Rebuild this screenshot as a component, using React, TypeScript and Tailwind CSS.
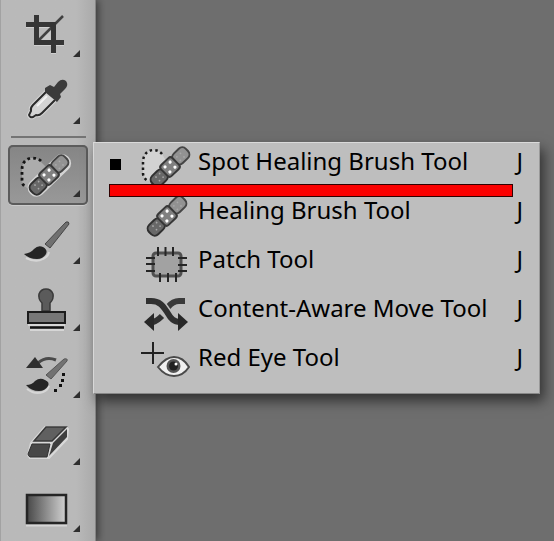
import type { ReactNode } from "react";

const dots = [
  [-3.5, -3.5],
  [3.5, -3.5],
  [-3.5, 3.5],
  [3.5, 3.5],
];

function Bandage({ x, y, halo = false }: { x: number; y: number; halo?: boolean }) {
  return (
    <g transform={`translate(${x} ${y}) rotate(-44)`}>
      {halo && (
        <rect x="-25" y="-7" width="50" height="15" rx="7" fill="none" stroke="#d4d4d4" strokeWidth="3" />
      )}
      <rect x="-24" y="-6" width="17" height="13" rx="5" fill="#686868" stroke="#303030" strokeWidth="2" />
      <rect x="7" y="-7" width="17" height="13" rx="5" fill="#929292" stroke="#454545" strokeWidth="2" />
      <rect x="-8" y="-7.500" width="16" height="15" rx="3" fill="#808080" stroke="#383838" strokeWidth="2" />
      {dots.map(([cx, cy]) => (
        <circle key={`${cx},${cy}`} cx={cx} cy={cy} r="1.600" fill="#fff" />
      ))}
      {[-17, -12, 12, 17].map((cx) => (
        <g key={cx} fill="#a8a8a8">
          <circle cx={cx} cy="-2.500" r="0.900" />
          <circle cx={cx} cy="2.500" r="0.900" />
        </g>
      ))}
    </g>
  );
}

function ToolIcon({ top, children }: { top: number; children: ReactNode }) {
  return (
    <svg viewBox={`8 ${top} 80 60`} className="block h-15 w-20" fill="none" aria-hidden="true">
      {children}
      <path d={`M80 ${top + 45}v7h-7z`} fill="#2e2e2e" />
    </svg>
  );
}

const crop = (
  <ToolIcon top={5}>
    <path d="M36.500 16V43.500H64M26 25.500H53.500V54" stroke="#d0d0d0" strokeWidth="5" />
    <path d="M39 42L52 28V41H39z" fill="#c8c8c8" />
    <path d="M38 41L63 16" stroke="#404040" strokeWidth="2.500" />
    <path d="M36.500 15V42.500H64M26 24.500H53.500V53" stroke="#353535" strokeWidth="5" />
  </ToolIcon>
);

const eyedropper = (
  <ToolIcon top={72}>
    <path d="M46 92L33 105q-3 3-2 6l-2 4q1 3 4 2l3-2q3 1 6-2L55 100" stroke="#d6d6d6" strokeWidth="4" />
    <path d="M46 92L33 105q-3 3-2 6l-2 4q1 3 4 2l3-2q3 1 6-2L55 100" fill="#d4d4d4" stroke="#2b2b2b" strokeWidth="2" />
    <path d="M37 106l10-10" stroke="#f2f2f2" strokeWidth="2" />
    <path d="M45 88l5-3 4 2 4-5q4-4 8-1 3 4-1 8l-5 5 1 3-4 5-12-10z" fill="#3b3b3b" />
  </ToolIcon>
);

const spotHealing = (
  <ToolIcon top={145}>
    <path d="M41 162q-3-4-10-4-9 2-9 12v10q0 5 5 8l22-18z" fill="#acacac" />
    <path d="M41 161q-3-3-10-3-9 2-9 12v10q0 5 4 7" stroke="#151515" strokeWidth="2.800" strokeDasharray="2.800 3" />
    <Bandage x={49} y={175} halo />
  </ToolIcon>
);

const brush = (
  <ToolIcon top={212}>
    <path d="M26 258q10 5 17 1 5-2 6-7" stroke="#d6d6d6" strokeWidth="2" />
    <path d="M45 244L66 222q3-1 3 2L50 248z" fill="#707070" stroke="#454545" />
    <path d="M24 254q7-1 10-5 4-4 9-2 5 3 3 7-3 5-9 5-8 0-13-5z" fill="#252525" />
  </ToolIcon>
);

const stamp = (
  <ToolIcon top={279}>
    <path d="M28 325h37M30 330h34" stroke="#d6d6d6" strokeWidth="2" />
    <path d="M42 311V303q-4-4-3-9 2-5 7-5t7 5q1 5-3 9v8z" fill="#5b5b5b" stroke="#3a3a3a" strokeWidth="1.500" />
    <rect x="28" y="312" width="37" height="11" fill="#777" stroke="#1c1c1c" strokeWidth="2" />
    <path d="M30 327.500h34" stroke="#111" strokeWidth="2.500" />
  </ToolIcon>
);

const historyBrush = (
  <ToolIcon top={345}>
    <path d="M38 362q8-7 18-3" stroke="#4a4a4a" strokeWidth="3" />
    <path d="M35 356l8 11H26z" fill="#303030" />
    <path d="M46 374L64 358q4-1 3 2L51 378z" fill="#727272" stroke="#555" />
    <path d="M27 388q8 6 16 3 5-2 6-6" stroke="#d6d6d6" strokeWidth="2" />
    <path d="M26 384q6 0 9-4 5-4 10-1 5 2 3 6-3 5-9 5-8 0-13-6z" fill="#252525" />
    <path d="M62 372h3v3h-3zM61 378h3v3h-3zM59 383h3v3h-3zM54 388h3v3h-3z" fill="#111" />
  </ToolIcon>
);

const eraser = (
  <ToolIcon top={412}>
    <path d="M45 426h21l2 2-1 10-18 19H30l-2-3 3-12z" fill="#d8d8d8" stroke="#d8d8d8" strokeWidth="2" />
    <path d="M46 426h20L52 440H34z" fill="#606060" stroke="#383838" strokeWidth="1.500" />
    <path d="M32 443h18l-3 13H30q-2-1-2-3z" fill="#484848" stroke="#303030" />
    <path d="M53 442l14-14v8L49 455z" fill="#3e3e3e" />
  </ToolIcon>
);

const gradient = (
  <ToolIcon top={479}>
    <defs>
      <linearGradient id="swatch">
        <stop stopColor="#484848" />
        <stop offset="1" stopColor="#d2d2d2" />
      </linearGradient>
    </defs>
    <path d="M26 524.500h41" stroke="#d6d6d6" strokeWidth="2" />
    <rect x="27" y="494" width="39" height="28" fill="url(#swatch)" stroke="#252525" strokeWidth="2.500" />
  </ToolIcon>
);

const tools = [
  { name: "Crop", icon: crop },
  { name: "Eyedropper", icon: eyedropper },
  { name: "Spot Healing Brush", icon: spotHealing, active: true },
  { name: "Brush", icon: brush },
  { name: "Clone Stamp", icon: stamp },
  { name: "History Brush", icon: historyBrush },
  { name: "Eraser", icon: eraser },
  { name: "Gradient", icon: gradient },
];

function MenuIcon({ top, children }: { top: number; children: ReactNode }) {
  return (
    <svg
      viewBox={`139 ${top} 52 40`}
      className="ml-[18px] block h-10 w-[52px] shrink-0 overflow-visible"
      fill="none"
      aria-hidden="true"
    >
      {children}
    </svg>
  );
}

const items = [
  {
    name: "Spot Healing Brush Tool",
    selected: true,
    icon: (
      <MenuIcon top={143}>
        <path d="M162 154q-3-4-9-4-9 1-10 11v12q0 5 5 8l20-17z" fill="#d2d2d2" />
        <path d="M162 154q-3-4-9-4-9 1-10 11v12q0 5 5 8" stroke="#1a1a1a" strokeWidth="2.500" strokeDasharray="2.500 3" />
        <Bandage x={170} y={167} />
      </MenuIcon>
    ),
  },
  {
    name: "Healing Brush Tool",
    icon: (
      <MenuIcon top={192}>
        <Bandage x={167} y={216} />
      </MenuIcon>
    ),
  },
  {
    name: "Patch Tool",
    icon: (
      <MenuIcon top={241}>
        <rect x="153" y="253" width="28" height="23" rx="3" fill="#a2a2a2" stroke="#505050" strokeWidth="3" />
        <path
          d="M158 247v9M165.500 247v9M173 247v9M160 273v9M168 273v9M176 273v9M146 258h9M146 264h9M146 271h9M178 258h9M178 265h9M178 271h9"
          stroke="#252525"
          strokeWidth="2"
        />
      </MenuIcon>
    ),
  },
  {
    name: "Content-Aware Move Tool",
    icon: (
      <MenuIcon top={290}>
        <path d="M185 301h-6q-6 0-11 6" stroke="#3a3a3a" strokeWidth="6" />
        <path d="M162 316q-5 5-9 6" stroke="#303030" strokeWidth="6" />
        <path d="M144 322l10-9v18z" fill="#282828" />
        <path d="M146 301h5c9 0 12 5 16 11 4 7 7 10 13 10" stroke="#bebebe" strokeWidth="9" />
        <path d="M146 301h5c9 0 12 5 16 11 4 7 7 10 13 10" stroke="#303030" strokeWidth="6" />
        <path d="M188 322l-10-9v18z" fill="#282828" />
      </MenuIcon>
    ),
  },
  {
    name: "Red Eye Tool",
    icon: (
      <MenuIcon top={339}>
        <path d="M141 353h23M153 342v22" stroke="#222" strokeWidth="2" />
        <path d="M158 367q8-10 16-10 9 0 15 10-6 9-15 9-9 0-16-9z" fill="#f0f0f0" stroke="#4a4a4a" strokeWidth="2" />
        <circle cx="173.500" cy="366" r="7" fill="#555" />
        <circle cx="173.500" cy="366" r="4.500" fill="#222" />
        <circle cx="176" cy="364" r="1.500" fill="#fff" />
      </MenuIcon>
    ),
  },
];

export default function App() {
  return (
    <main className="relative flex min-h-screen overflow-hidden bg-[#6e6e6e] font-['Noto_Sans',sans-serif] text-black">
      <nav
        aria-label="Tools"
        className="flex w-24 shrink-0 flex-col gap-[7px] border-x border-l-[#a2a2a2] border-r-[#858585] bg-linear-to-r from-[#b9b9b9] from-80% to-[#aaaaaa] pt-[5px] pl-[7px] shadow-[2px_0_8px_rgba(0,0,0,0.5)]"
      >
        {tools.map((tool) => (
          <div key={tool.name} className="flex flex-col">
            {tool.active && <hr className="-mt-[3px] mb-[7px] ml-[3px] w-[75px] border-0 border-t-2 border-[#747474]" />}
            <button
              type="button"
              aria-label={tool.name}
              aria-pressed={!!tool.active}
              className={
                tool.active
                  ? "h-15 w-20 rounded-[5px] bg-linear-to-b from-[#858585] to-[#999999] shadow-[inset_0_0_0_2px_#5c5c5c,0_1px_0_#cccccc]"
                  : "h-15 w-20"
              }
            >
              {tool.icon}
            </button>
          </div>
        ))}
      </nav>

      <div className="absolute top-[142px] left-[93px] w-[447px]">
        <ul
          role="menu"
          aria-label="Healing tools"
          className="flex flex-col gap-[9px] border border-t-[#dadada] border-r-[#999999] border-b-[#888888] border-l-[#d8d8d8] bg-[#bebebe] pb-[14px] shadow-[4px_7px_12px_rgba(0,0,0,0.55)]"
        >
          {items.map((item) => (
            <li key={item.name} role="none">
              <button type="button" role="menuitem" className="flex h-10 w-full items-start px-4 text-left">
                <span className={item.selected ? "mt-4 size-[11px] shrink-0 bg-black" : "size-[11px] shrink-0"} />
                {item.icon}
                <span className="ml-[7px] flex-1 text-2xl leading-9 whitespace-nowrap">{item.name}</span>
                <span className="text-2xl leading-9">J</span>
              </button>
            </li>
          ))}
        </ul>
        <div className="absolute top-[42px] right-[27px] left-4 h-[13px] border border-[#300000] bg-[#fa0000]" />
      </div>
    </main>
  );
}
